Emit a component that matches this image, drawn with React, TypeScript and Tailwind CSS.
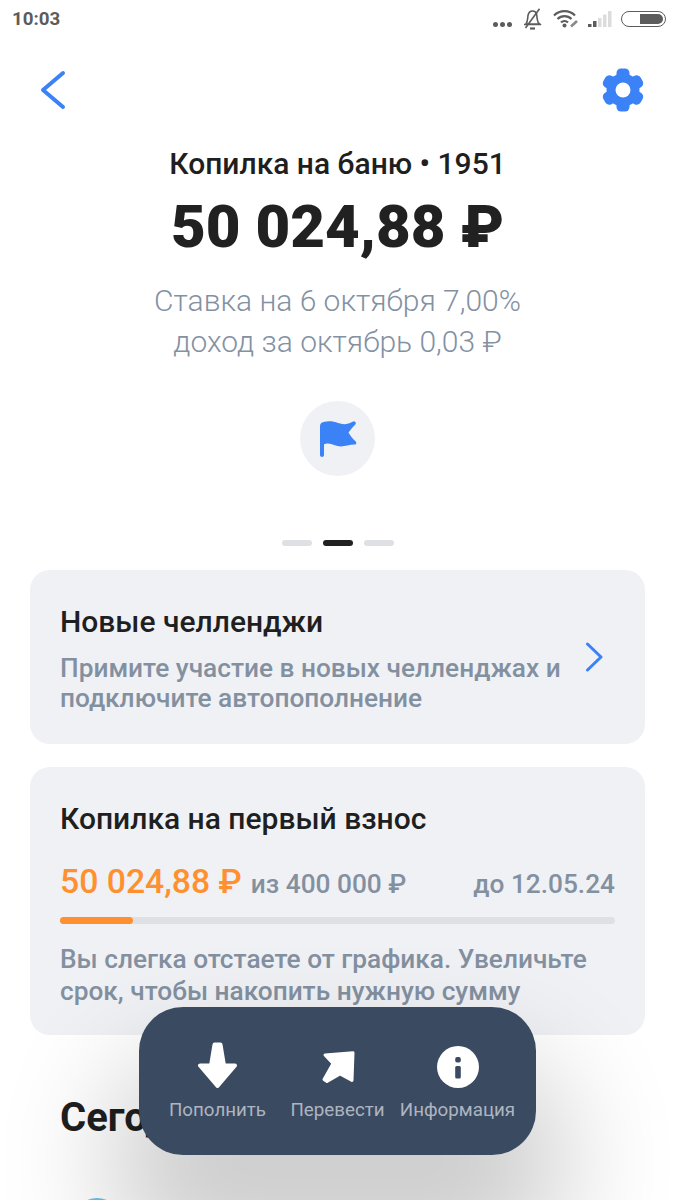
import React from "react";

function StatusIcons() {
  return (
    <div className="flex items-center">
      <div className="flex gap-[2px] mt-[10px] mr-[11px]">
        <span className="w-[5px] h-[5px] rounded-full bg-[#5c5c5c]" />
        <span className="w-[5px] h-[5px] rounded-full bg-[#5c5c5c]" />
        <span className="w-[5px] h-[5px] rounded-full bg-[#5c5c5c]" />
      </div>
      <svg width="19" height="22" viewBox="0 0 19 22" fill="none" stroke="#5c5c5c" strokeWidth="1.600" className="mr-[11px]">
        <path d="M3 16c1.800-2.500 1.500-5 2-8.500.5-3 2.300-4.500 4.500-4.500 1.800 0 3.300.8 4 2.500l.8 6c.3 2 .9 3.500 2.200 4.500z M1 16.500h17" />
        <path d="M7 20.500h5" strokeWidth="2.200" />
        <path d="M2.500 20L16.500 .8" />
      </svg>
      <svg width="27" height="18" viewBox="0 0 27 18" fill="none" className="mr-[8px]">
        <path d="M1 5.500a15 15 0 0 1 21 0M4.500 9a10 10 0 0 1 14 0M8 12.500a5 5 0 0 1 7 0" stroke="#5c5c5c" strokeWidth="2.200" />
        <circle cx="11.500" cy="15.500" r="2" fill="#5c5c5c" />
        <path d="M18 16.500l6-5.500" stroke="#8a8a8a" strokeWidth="2.600" />
      </svg>
      <svg width="24" height="16" viewBox="0 0 24 16" className="mr-[9px]">
        <rect x="0" y="13" width="3.500" height="3" fill="#5c5c5c" />
        <rect x="5" y="10" width="3.500" height="6" fill="#5c5c5c" />
        <rect x="10" y="7" width="3.500" height="9" fill="#dcdcdc" />
        <rect x="15" y="3.500" width="3.500" height="12.500" fill="#dcdcdc" />
        <rect x="20" y="0" width="3.500" height="16" fill="#dcdcdc" />
      </svg>
      <div className="w-[45px] h-[16px] rounded-full border-[1.500px] border-[#5c5c5c] flex justify-end items-center pr-[2px]">
        <div className="w-[23px] h-[10px] bg-[#5c5c5c] rounded-r-full rounded-l-[1px]" />
      </div>
    </div>
  );
}

function Gear() {
  const angles = [0, 60, 120, 180, 240, 300];
  return (
    <svg width="44" height="44" viewBox="0 0 44 44">
      <circle cx="22" cy="22" r="16.500" fill="#3b82f6" />
      {angles.map((a) => (
        <rect key={a} x="15.500" y="0.500" width="13" height="22" rx="4.500" fill="#3b82f6" transform={`rotate(${a} 22 22)`} />
      ))}
      <circle cx="22" cy="22" r="7.500" fill="#ffffff" />
    </svg>
  );
}

function Flag() {
  return (
    <svg width="37" height="37" viewBox="0 0 37 37" className="ml-[2px] mt-[2px]">
      <path
        fill="#3b82f6"
        d="M0 5C0 2.500 1.500 1.500 3.500 1C9 -0.300 14 .5 18 2C23 3.800 28 3.500 32.500 .8C35 -0.300 36.500 1.200 35.500 3.200C33 6 30.500 8.500 28.500 11.500C30 14.500 33 18 35.700 20.500C37 22 36 23.500 34.500 23.600C29 23.700 25.500 25.500 21 25.500C16 25.500 12 22.500 8 22.500C6.500 22.500 5 22.800 4 23.500V34C4 36.500 0 36.500 0 34Z"
      />
    </svg>
  );
}

function ArrowDown() {
  return (
    <svg width="39" height="46" viewBox="0 0 39 46" className="-mt-[4px]">
      <path
        fill="#fff"
        stroke="#fff"
        strokeLinejoin="round"
        strokeWidth="4"
        d="M16.500 2.500L22.500 2.500L26 23.500L37 23.500L19.500 44L2 23.500L13 23.500Z"
      />
    </svg>
  );
}

function ArrowUpRight() {
  return (
    <svg width="34" height="33" viewBox="0 0 34 33">
      <path
        fill="#fff"
        stroke="#fff"
        strokeLinejoin="round"
        strokeWidth="3"
        d="M4 4L32 1.800L31 29.500L19 23L6 30.500L3 28.500L12 12.500Z"
      />
    </svg>
  );
}

function InfoIcon() {
  return (
    <svg width="42" height="42" viewBox="0 0 42 42">
      <circle cx="21" cy="21" r="21" fill="#fff" />
      <rect x="18.200" y="11" width="5.600" height="5.500" rx="2" fill="#3a4a60" />
      <rect x="18.200" y="20" width="5.600" height="12.500" rx="1.500" fill="#3a4a60" />
    </svg>
  );
}

function Action({ icon, label }: { icon: React.ReactNode; label: string }) {
  return (
    <div className="flex flex-col items-center w-[120px]">
      <div className="h-[50px] flex items-center justify-center">{icon}</div>
      <span className="mt-[6px] text-[18.750px] leading-[24px] text-[#aeb5c0] whitespace-nowrap">{label}</span>
    </div>
  );
}

export default function App() {
  return (
    <div
      className="relative w-[675px] h-[1200px] overflow-hidden bg-white"
      style={{ fontFamily: "Roboto, 'Noto Sans', sans-serif" }}
    >
      <div className="h-[38px] pl-[12px] pr-[9px] flex items-center justify-between">
        <span className="text-[18.750px] leading-[24px] font-bold text-[#5c5c5c]">10:03</span>
        <StatusIcons />
      </div>

      <div className="h-[104px] pl-[40px] pr-[30px] flex items-center justify-between">
        <svg width="26" height="40" viewBox="0 0 26 40" fill="none" stroke="#3b82f6" strokeWidth="4" strokeLinecap="round" strokeLinejoin="round">
          <path d="M23 3L3 20l20 17" />
        </svg>
        <Gear />
      </div>

      <div className="flex flex-col items-center text-center">
        <div className="text-[30px] leading-[44px] font-medium text-[#1f1f1f]">Копилка на баню • 1951</div>
        <div className="mt-[7px] text-[60px] leading-[68px] font-black text-[#212121]">50 024,88 ₽</div>
        <div className="mt-[19px] text-[30px] leading-[41px] font-light text-[#8391a3]">
          Ставка на 6 октября 7,00%
          <br />
          доход за октябрь 0,03 ₽
        </div>
        <div className="mt-[39px] w-[75px] h-[75px] rounded-full bg-[#f0f1f5] flex items-center justify-center">
          <Flag />
        </div>
        <div className="mt-[64px] flex gap-[11px]">
          <span className="w-[30px] h-[6px] rounded-full bg-[#dfe0e4]" />
          <span className="w-[30px] h-[6px] rounded-full bg-[#212121]" />
          <span className="w-[30px] h-[6px] rounded-full bg-[#dfe0e4]" />
        </div>
      </div>

      <div className="mx-[30px] mt-[24px] h-[174px] rounded-[20px] bg-[#f0f1f5] pl-[30px] pr-[42px] pt-[32px] flex items-start justify-between">
        <div>
          <div className="text-[30px] leading-[40px] font-medium text-[#1f1f1f]">Новые челленджи</div>
          <div className="mt-[11px] text-[26.250px] leading-[30px] font-medium text-[#8390a0] whitespace-nowrap">
            Примите участие в новых челленджах и
            <br />
            подключите автопополнение
          </div>
        </div>
        <svg width="18" height="30" viewBox="0 0 18 30" fill="none" stroke="#3b82f6" strokeWidth="3" strokeLinecap="round" strokeLinejoin="round" className="mt-[40px]">
          <path d="M2.500 2L16 15 2.500 28" />
        </svg>
      </div>

      <div className="mx-[30px] mt-[23px] h-[268px] rounded-[20px] bg-[#f0f1f5] px-[30px] pt-[32px]">
        <div className="text-[30px] leading-[40px] font-medium text-[#1f1f1f]">Копилка на первый взнос</div>
        <div className="mt-[23px] flex items-baseline justify-between">
          <div className="flex items-baseline gap-[9px]">
            <span className="text-[33.750px] leading-[40px] font-medium text-[#ff902f]">50 024,88 ₽</span>
            <span className="text-[26.250px] leading-[40px] font-medium text-[#8390a0]">из 400 000 ₽</span>
          </div>
          <span className="text-[26.250px] leading-[40px] font-medium text-[#8390a0]">до 12.05.24</span>
        </div>
        <div className="mt-[13px] h-[7px] rounded-full bg-[#dfe0e4]">
          <div className="w-[73px] h-full rounded-full bg-[#ff902f]" />
        </div>
        <div className="mt-[19px] text-[26.250px] leading-[32px] font-medium text-[#8390a0] whitespace-nowrap">
          Вы слегка отстаете от графика. Увеличьте
          <br />
          срок, чтобы накопить нужную сумму
        </div>
      </div>

      <div className="mt-[59px] pl-[60px] text-[40px] leading-[48px] font-bold text-[#1f1f1f]">Сегодня</div>
      <div className="mt-[56px] ml-[73px] w-[48px] h-[48px] rounded-full bg-[#6ec1ee]" />

      <div className="absolute left-[139px] top-[1007px] w-[397px] h-[148px] rounded-[44px] bg-[#3a4a60] shadow-[0_80px_116px_27px_rgba(0,0,0,0.2)] flex justify-center pt-[35px]">
        <Action icon={<ArrowDown />} label="Пополнить" />
        <Action icon={<ArrowUpRight />} label="Перевести" />
        <Action icon={<InfoIcon />} label="Информация" />
      </div>
    </div>
  );
}
